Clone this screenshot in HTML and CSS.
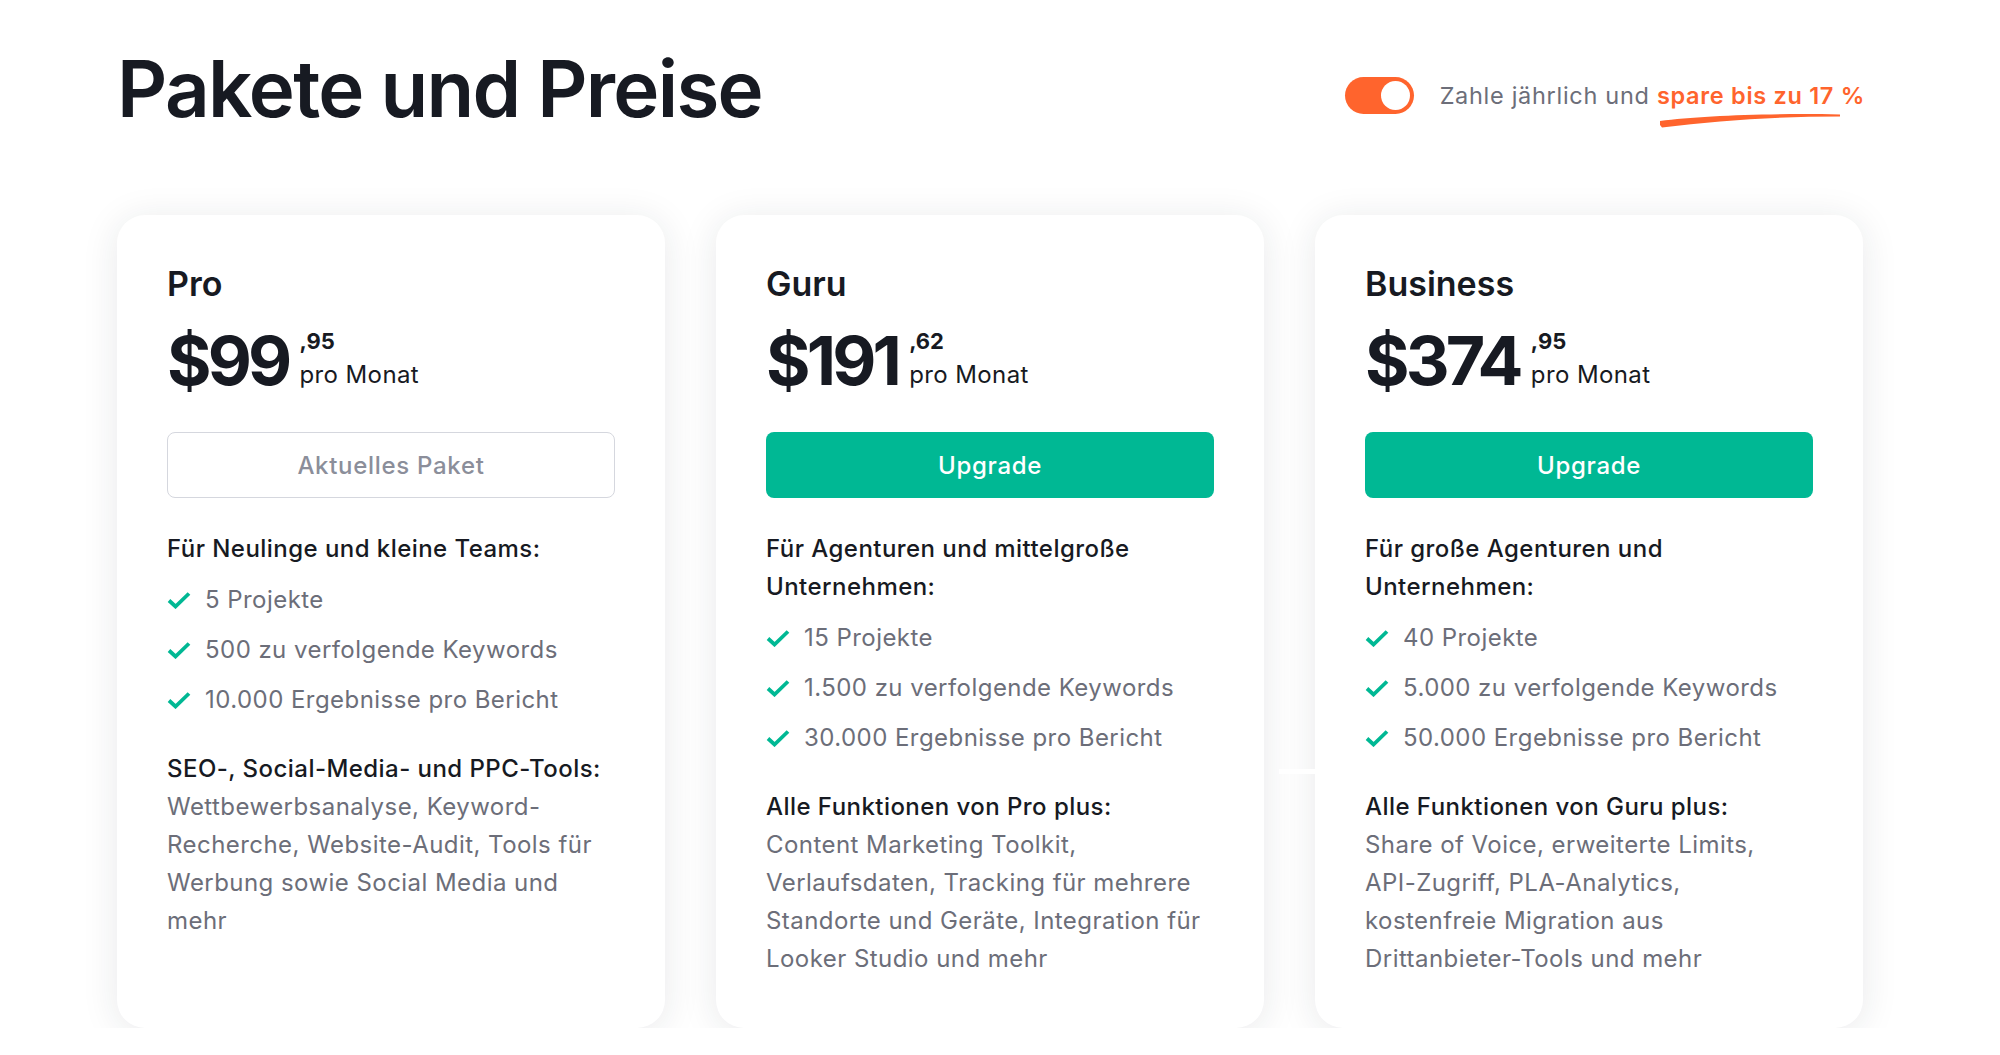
FILE: index.html
```html
<!DOCTYPE html>
<html lang="de">
<head>
<meta charset="utf-8">
<title>Pakete und Preise</title>
<link rel="stylesheet" href="styles.css">
</head>
<body>
<div class="page">
  <header class="header">
    <h1 class="title">Pakete und Preise</h1>
    <div class="billing">
      <span class="toggle"><span class="knob"></span></span>
      <span class="billing-text">Zahle jährlich und <span class="save">spare bis zu 17 %<svg class="squiggle" viewBox="0 0 182 16" preserveAspectRatio="none"><path d="M1 9 C 40 4, 110 1, 181 2.5 L 181 4.5 C 120 4.5, 60 8, 3 15.5 L 1 13 Z" fill="#ff642d"/></svg></span></span>
    </div>
  </header>

  <section class="cards">
    <article class="card">
      <h2 class="plan">Pro</h2>
      <div class="price">
        <span class="amount">$99</span>
        <span class="price-side"><span class="cents">,95</span><span class="period">pro Monat</span></span>
      </div>
      <button class="btn btn-current">Aktuelles Paket</button>
      <p class="for">Für Neulinge und kleine Teams:</p>
      <ul class="features">
        <li><svg class="check" viewBox="0 0 24 18"><path d="M2 9.5 L8.5 15.5 L22 2.5" fill="none" stroke="#00b894" stroke-width="3.8"/></svg>5 Projekte</li>
        <li><svg class="check" viewBox="0 0 24 18"><path d="M2 9.5 L8.5 15.5 L22 2.5" fill="none" stroke="#00b894" stroke-width="3.8"/></svg>500 zu verfolgende Keywords</li>
        <li><svg class="check" viewBox="0 0 24 18"><path d="M2 9.5 L8.5 15.5 L22 2.5" fill="none" stroke="#00b894" stroke-width="3.8"/></svg>10.000 Ergebnisse pro Bericht</li>
      </ul>
      <div class="extra">
        <p class="extra-title">SEO-, Social-Media- und PPC-Tools:</p>
        <p class="extra-text">Wettbewerbsanalyse, Keyword-<br>Recherche, Website-Audit, Tools für<br>Werbung sowie Social Media und<br>mehr</p>
      </div>
    </article>

    <article class="card">
      <h2 class="plan">Guru</h2>
      <div class="price">
        <span class="amount">$191</span>
        <span class="price-side"><span class="cents">,62</span><span class="period">pro Monat</span></span>
      </div>
      <button class="btn btn-upgrade">Upgrade</button>
      <p class="for">Für Agenturen und mittelgroße<br>Unternehmen:</p>
      <ul class="features">
        <li><svg class="check" viewBox="0 0 24 18"><path d="M2 9.5 L8.5 15.5 L22 2.5" fill="none" stroke="#00b894" stroke-width="3.8"/></svg>15 Projekte</li>
        <li><svg class="check" viewBox="0 0 24 18"><path d="M2 9.5 L8.5 15.5 L22 2.5" fill="none" stroke="#00b894" stroke-width="3.8"/></svg>1.500 zu verfolgende Keywords</li>
        <li><svg class="check" viewBox="0 0 24 18"><path d="M2 9.5 L8.5 15.5 L22 2.5" fill="none" stroke="#00b894" stroke-width="3.8"/></svg>30.000 Ergebnisse pro Bericht</li>
      </ul>
      <div class="extra">
        <p class="extra-title">Alle Funktionen von Pro plus:</p>
        <p class="extra-text">Content Marketing Toolkit,<br>Verlaufsdaten, Tracking für mehrere<br>Standorte und Geräte, Integration für<br>Looker Studio und mehr</p>
      </div>
    </article>

    <article class="card">
      <span class="glitch"></span>
      <h2 class="plan">Business</h2>
      <div class="price">
        <span class="amount">$374</span>
        <span class="price-side"><span class="cents">,95</span><span class="period">pro Monat</span></span>
      </div>
      <button class="btn btn-upgrade">Upgrade</button>
      <p class="for">Für große Agenturen und<br>Unternehmen:</p>
      <ul class="features">
        <li><svg class="check" viewBox="0 0 24 18"><path d="M2 9.5 L8.5 15.5 L22 2.5" fill="none" stroke="#00b894" stroke-width="3.8"/></svg>40 Projekte</li>
        <li><svg class="check" viewBox="0 0 24 18"><path d="M2 9.5 L8.5 15.5 L22 2.5" fill="none" stroke="#00b894" stroke-width="3.8"/></svg>5.000 zu verfolgende Keywords</li>
        <li><svg class="check" viewBox="0 0 24 18"><path d="M2 9.5 L8.5 15.5 L22 2.5" fill="none" stroke="#00b894" stroke-width="3.8"/></svg>50.000 Ergebnisse pro Bericht</li>
      </ul>
      <div class="extra">
        <p class="extra-title">Alle Funktionen von Guru plus:</p>
        <p class="extra-text">Share of Voice, erweiterte Limits,<br>API-Zugriff, PLA-Analytics,<br>kostenfreie Migration aus<br>Drittanbieter-Tools und mehr</p>
      </div>
    </article>
  </section>
</div>
</body>
</html>
```

FILE: styles.css
```css
* { box-sizing: border-box; }

html, body {
  margin: 0;
  padding: 0;
  background: #ffffff;
}

body {
  font-family: Inter, "Noto Sans", "Liberation Sans", sans-serif;
  color: #171a22;
}

.page {
  width: 1748px;
  margin-left: 117px;
  padding-top: 50px;
}

.header {
  display: flex;
  justify-content: space-between;
  align-items: flex-start;
}

.title {
  margin: 0;
  font-size: 78px;
  line-height: 78px;
  font-weight: 600;
  letter-spacing: -1.75px;
  color: #171a22;
}

.billing {
  display: flex;
  align-items: center;
  gap: 26px;
  margin-top: 27px;
}

.toggle {
  display: flex;
  align-items: center;
  justify-content: flex-end;
  width: 69px;
  height: 37px;
  padding: 4px;
  border-radius: 19px;
  background: #ff642d;
}

.knob {
  width: 29px;
  height: 29px;
  border-radius: 50%;
  background: #ffffff;
}

.billing-text {
  font-size: 23.5px;
  line-height: 37px;
  letter-spacing: 0.7px;
  color: #6c6e79;
}

.save {
  position: relative;
  color: #ff642d;
  font-weight: 600;
}

.squiggle {
  position: absolute;
  left: 2px;
  top: 31px;
  width: 182px;
  height: 16px;
}

.cards {
  display: grid;
  grid-template-columns: repeat(3, 548px);
  gap: 51px;
  margin-top: 87px;
}

.card {
  position: relative;
  background: #ffffff;
  border-radius: 28px;
  box-shadow: 0 4px 36px rgba(30, 36, 50, 0.1);
  padding: 49px 50px 50px;
}

.glitch {
  position: absolute;
  left: -36px;
  top: 554px;
  width: 36px;
  height: 5px;
  background: #ffffff;
}

.plan {
  margin: 0;
  font-size: 34px;
  line-height: 40px;
  font-weight: 600;
  color: #171a22;
}

.price {
  display: flex;
  align-items: flex-start;
  margin-top: 22px;
}

.amount {
  font-size: 68px;
  line-height: 68px;
  font-weight: 700;
  letter-spacing: -3.8px;
  color: #171a22;
}

.price-side {
  display: flex;
  flex-direction: column;
  margin-left: 11px;
  padding-top: 4px;
}

.cents {
  font-size: 22px;
  line-height: 22px;
  font-weight: 700;
}

.period {
  margin-top: 9px;
  font-size: 24px;
  line-height: 28px;
  letter-spacing: 0.4px;
  font-weight: 400;
}

.btn {
  display: block;
  width: 100%;
  height: 66px;
  margin-top: 38px;
  border-radius: 8px;
  font-family: inherit;
  font-size: 24px;
  letter-spacing: 0.7px;
  font-weight: 500;
  cursor: pointer;
}

.btn-current {
  background: #ffffff;
  border: 1px solid #d5d7de;
  color: #8b8e9a;
}

.btn-upgrade {
  background: #00b894;
  border: none;
  color: #ffffff;
}

.for {
  margin: 32px 0 0;
  font-size: 24px;
  line-height: 38px;
  letter-spacing: 0.45px;
  font-weight: 500;
  color: #171a22;
}

.features {
  list-style: none;
  margin: 13px 0 0;
  padding: 0;
  display: flex;
  flex-direction: column;
  gap: 12px;
}

.features li {
  display: flex;
  align-items: center;
  gap: 14px;
  font-size: 24px;
  line-height: 38px;
  letter-spacing: 0.45px;
  color: #6c6e79;
}

.check {
  width: 24px;
  height: 18px;
  flex: none;
}

.extra {
  margin-top: 31px;
}

.extra-title {
  margin: 0;
  font-size: 24px;
  line-height: 38px;
  letter-spacing: 0.45px;
  font-weight: 500;
  color: #171a22;
}

.extra-text {
  margin: 0;
  font-size: 24px;
  line-height: 38px;
  letter-spacing: 0.45px;
  color: #6c6e79;
}
```
